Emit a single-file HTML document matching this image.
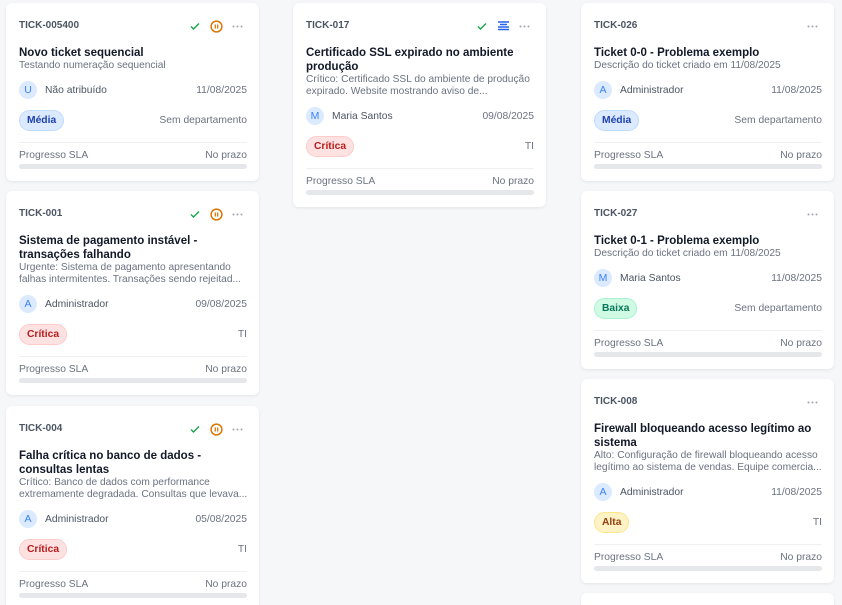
<!DOCTYPE html>
<html><head><meta charset="utf-8"><style>
*{box-sizing:border-box;margin:0;padding:0}
html,body{width:842px;height:605px;overflow:hidden}
body{background:#f6f7f9;font-family:"Liberation Sans",sans-serif;position:relative;color:#374151}
.card{position:absolute;width:253px;background:#fff;border-radius:6px;box-shadow:0 1px 3px rgba(0,0,0,.08);padding:16px 12px 12px 13px}
.hd{height:14px;line-height:14px;display:flex;justify-content:space-between;align-items:center}
.id{font-size:10px;font-weight:bold;color:#4b5563}
.ic{display:flex;align-items:center;gap:9px;height:14px;margin-right:4px}
.t{margin-top:13px;font-size:11.5px;font-weight:bold;line-height:14px;color:#111827}
.d{font-size:10.2px;line-height:12px;color:#6b7280;white-space:nowrap}
.row{margin-top:9px;height:18px;display:flex;align-items:center;justify-content:space-between;font-size:10.3px;color:#6b7280}
.who{display:flex;align-items:center;color:#4b5563}
.av{display:inline-flex;width:18px;height:18px;border-radius:50%;background:#dbeafe;color:#3b82f6;font-size:10.5px;align-items:center;justify-content:center;margin-right:8px}
.bd{margin-top:11px;height:20px;display:flex;align-items:center;justify-content:space-between;font-size:10.3px;color:#6b7280}
.b{height:21px;line-height:19px;padding:0 7px;border-radius:11px;font-size:10.3px;font-weight:bold;border:1px solid}
.med{background:#dbeafe;color:#1e40af;border-color:#bfdbfe}
.cri{background:#fee2e2;color:#b91c1c;border-color:#fecaca}
.bai{background:#d1fae5;color:#047857;border-color:#a7f3d0}
.alt{background:#fef3c7;color:#92400e;border-color:#fde68a}
.hr{margin-top:12px;border-top:1px solid #eef0f2}
.sla{margin-top:7px;line-height:12px;display:flex;justify-content:space-between;font-size:10.3px;color:#6b7280}
.bar{margin-top:2px;height:5px;border-radius:3px;background:#e5e7eb}
</style></head><body>

<!-- col1 -->
<div class="card" style="left:6px;top:3px">
<div class="hd"><span class="id">TICK-005400</span><span class="ic"><svg width="12" height="12" viewBox="0 0 12 12"><path d="M2 6.5l2.5 2.5L10 3.5" fill="none" stroke="#16a34a" stroke-width="1.4"/></svg><svg width="13" height="13" viewBox="0 0 13 13"><circle cx="6.5" cy="6.5" r="5.4" fill="none" stroke="#d97706" stroke-width="1.5"/><path d="M5.3 4.5v4M7.7 4.5v4" stroke="#d97706" stroke-width="1.3"/></svg><svg width="11" height="3" viewBox="0 0 11 3"><circle cx="1.5" cy="1.5" r="1" fill="#9ca3af"/><circle cx="5.5" cy="1.5" r="1" fill="#9ca3af"/><circle cx="9.5" cy="1.5" r="1" fill="#9ca3af"/></svg></span></div>
<div class="t">Novo ticket sequencial</div>
<div class="d">Testando numeração sequencial</div>
<div class="row"><span class="who"><span class="av">U</span>Não atribuído</span><span>11/08/2025</span></div>
<div class="bd"><span class="b med">Média</span><span>Sem departamento</span></div>
<div class="hr"></div><div class="sla"><span>Progresso SLA</span><span>No prazo</span></div><div class="bar"></div>
</div>

<div class="card" style="left:6px;top:191px">
<div class="hd"><span class="id">TICK-001</span><span class="ic"><svg width="12" height="12" viewBox="0 0 12 12"><path d="M2 6.5l2.5 2.5L10 3.5" fill="none" stroke="#16a34a" stroke-width="1.4"/></svg><svg width="13" height="13" viewBox="0 0 13 13"><circle cx="6.5" cy="6.5" r="5.4" fill="none" stroke="#d97706" stroke-width="1.5"/><path d="M5.3 4.5v4M7.7 4.5v4" stroke="#d97706" stroke-width="1.3"/></svg><svg width="11" height="3" viewBox="0 0 11 3"><circle cx="1.5" cy="1.5" r="1" fill="#9ca3af"/><circle cx="5.5" cy="1.5" r="1" fill="#9ca3af"/><circle cx="9.5" cy="1.5" r="1" fill="#9ca3af"/></svg></span></div>
<div class="t">Sistema de pagamento instável -<br>transações falhando</div>
<div class="d">Urgente: Sistema de pagamento apresentando<br>falhas intermitentes. Transações sendo rejeitad...</div>
<div class="row"><span class="who"><span class="av">A</span>Administrador</span><span>09/08/2025</span></div>
<div class="bd"><span class="b cri">Crítica</span><span>TI</span></div>
<div class="hr"></div><div class="sla"><span>Progresso SLA</span><span>No prazo</span></div><div class="bar"></div>
</div>

<div class="card" style="left:6px;top:406px">
<div class="hd"><span class="id">TICK-004</span><span class="ic"><svg width="12" height="12" viewBox="0 0 12 12"><path d="M2 6.5l2.5 2.5L10 3.5" fill="none" stroke="#16a34a" stroke-width="1.4"/></svg><svg width="13" height="13" viewBox="0 0 13 13"><circle cx="6.5" cy="6.5" r="5.4" fill="none" stroke="#d97706" stroke-width="1.5"/><path d="M5.3 4.5v4M7.7 4.5v4" stroke="#d97706" stroke-width="1.3"/></svg><svg width="11" height="3" viewBox="0 0 11 3"><circle cx="1.5" cy="1.5" r="1" fill="#9ca3af"/><circle cx="5.5" cy="1.5" r="1" fill="#9ca3af"/><circle cx="9.5" cy="1.5" r="1" fill="#9ca3af"/></svg></span></div>
<div class="t">Falha crítica no banco de dados -<br>consultas lentas</div>
<div class="d">Crítico: Banco de dados com performance<br>extremamente degradada. Consultas que levava...</div>
<div class="row"><span class="who"><span class="av">A</span>Administrador</span><span>05/08/2025</span></div>
<div class="bd"><span class="b cri">Crítica</span><span>TI</span></div>
<div class="hr"></div><div class="sla"><span>Progresso SLA</span><span>No prazo</span></div><div class="bar"></div>
</div>

<!-- col2 -->
<div class="card" style="left:293px;top:3px">
<div class="hd"><span class="id">TICK-017</span><span class="ic"><svg width="12" height="12" viewBox="0 0 12 12"><path d="M2 6.5l2.5 2.5L10 3.5" fill="none" stroke="#16a34a" stroke-width="1.4"/></svg><svg width="13" height="12" viewBox="0 0 13 12"><path d="M1 2h11M3 4.5h7M1 7h11M1 9.5h11" stroke="#2563eb" stroke-width="1.4"/></svg><svg width="11" height="3" viewBox="0 0 11 3"><circle cx="1.5" cy="1.5" r="1" fill="#9ca3af"/><circle cx="5.5" cy="1.5" r="1" fill="#9ca3af"/><circle cx="9.5" cy="1.5" r="1" fill="#9ca3af"/></svg></span></div>
<div class="t">Certificado SSL expirado no ambiente<br>produção</div>
<div class="d">Crítico: Certificado SSL do ambiente de produção<br>expirado. Website mostrando aviso de...</div>
<div class="row"><span class="who"><span class="av">M</span>Maria Santos</span><span>09/08/2025</span></div>
<div class="bd"><span class="b cri">Crítica</span><span>TI</span></div>
<div class="hr"></div><div class="sla"><span>Progresso SLA</span><span>No prazo</span></div><div class="bar"></div>
</div>

<!-- col3 -->
<div class="card" style="left:581px;top:3px">
<div class="hd"><span class="id">TICK-026</span><span class="ic"><svg width="11" height="3" viewBox="0 0 11 3"><circle cx="1.5" cy="1.5" r="1" fill="#9ca3af"/><circle cx="5.5" cy="1.5" r="1" fill="#9ca3af"/><circle cx="9.5" cy="1.5" r="1" fill="#9ca3af"/></svg></span></div>
<div class="t">Ticket 0-0 - Problema exemplo</div>
<div class="d">Descrição do ticket criado em 11/08/2025</div>
<div class="row"><span class="who"><span class="av">A</span>Administrador</span><span>11/08/2025</span></div>
<div class="bd"><span class="b med">Média</span><span>Sem departamento</span></div>
<div class="hr"></div><div class="sla"><span>Progresso SLA</span><span>No prazo</span></div><div class="bar"></div>
</div>

<div class="card" style="left:581px;top:191px">
<div class="hd"><span class="id">TICK-027</span><span class="ic"><svg width="11" height="3" viewBox="0 0 11 3"><circle cx="1.5" cy="1.5" r="1" fill="#9ca3af"/><circle cx="5.5" cy="1.5" r="1" fill="#9ca3af"/><circle cx="9.5" cy="1.5" r="1" fill="#9ca3af"/></svg></span></div>
<div class="t">Ticket 0-1 - Problema exemplo</div>
<div class="d">Descrição do ticket criado em 11/08/2025</div>
<div class="row"><span class="who"><span class="av">M</span>Maria Santos</span><span>11/08/2025</span></div>
<div class="bd"><span class="b bai">Baixa</span><span>Sem departamento</span></div>
<div class="hr"></div><div class="sla"><span>Progresso SLA</span><span>No prazo</span></div><div class="bar"></div>
</div>

<div class="card" style="left:581px;top:379px">
<div class="hd"><span class="id">TICK-008</span><span class="ic"><svg width="11" height="3" viewBox="0 0 11 3"><circle cx="1.5" cy="1.5" r="1" fill="#9ca3af"/><circle cx="5.5" cy="1.5" r="1" fill="#9ca3af"/><circle cx="9.5" cy="1.5" r="1" fill="#9ca3af"/></svg></span></div>
<div class="t">Firewall bloqueando acesso legítimo ao<br>sistema</div>
<div class="d">Alto: Configuração de firewall bloqueando acesso<br>legítimo ao sistema de vendas. Equipe comercia...</div>
<div class="row"><span class="who"><span class="av">A</span>Administrador</span><span>11/08/2025</span></div>
<div class="bd"><span class="b alt">Alta</span><span>TI</span></div>
<div class="hr"></div><div class="sla"><span>Progresso SLA</span><span>No prazo</span></div><div class="bar"></div>
</div>

<div class="card" style="left:581px;top:593px;height:40px"></div>
</body></html>
